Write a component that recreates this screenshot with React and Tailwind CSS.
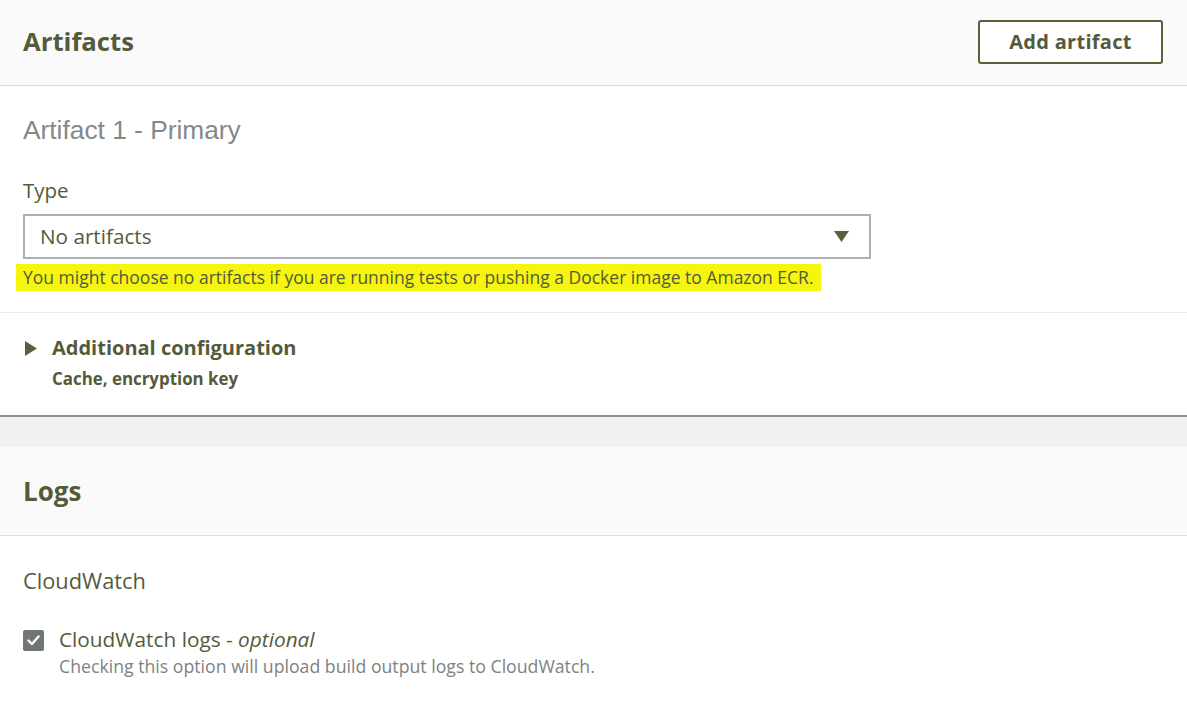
import React from "react";

const olive = "text-[#545b3a]";

export default function App() {
  return (
    <div className="w-[1187px] h-[702px] overflow-hidden bg-white [font-family:'Open_Sans','Noto_Sans',sans-serif]">
      {/* Artifacts header */}
      <div className="h-[86px] bg-[#fafafa] border-b border-[#dcdcdc] px-[23px] flex items-center justify-between">
        <h2 className={`text-[25.7px] font-bold ${olive} leading-none -mt-[2px]`}>Artifacts</h2>
        <button className={`w-[185px] h-[44px] border-2 border-[#5a6038] rounded-[3px] bg-white text-[20px] font-bold ${olive} tracking-[0.3px] mr-[1px] -mt-[2px]`}>
          Add artifact
        </button>
      </div>

      {/* Artifact body */}
      <div className="px-[23px] pt-[28px] pb-[21px]">
        <div className="text-[26.3px] leading-[33px] text-[#84898a] [font-family:'Liberation_Sans',Arial,sans-serif]">
          Artifact 1 - Primary
        </div>
        <div className={`mt-[30px] text-[20.5px] leading-[26px] ${olive}`}>Type</div>
        <div className="mt-[11px] w-[848px] h-[45px] border-2 border-[#aab0b0] flex items-center justify-between pl-[15px] pr-[20px]">
          <span className={`text-[20.7px] ${olive}`}>No artifacts</span>
          <svg width="15" height="11" viewBox="0 0 15 11">
            <polygon points="0,0 15,0 7.5,11" fill="#5a5f3c" />
          </svg>
        </div>
        <div className="mt-[5px]">
          <span className="inline-block bg-[#f5f50e] -ml-[7px] px-[7px] py-[2px] text-[17.5px] leading-[23px] text-[#545b3a]">
            You might choose no artifacts if you are running tests or pushing a Docker image to Amazon ECR.
          </span>
        </div>
      </div>

      {/* Additional configuration */}
      <div className="border-t border-[#ececec] border-b-2 border-b-[#8d928d] px-[23px] pt-[21px] h-[105px]">
        <div className="flex items-center gap-[15px]">
          <svg width="12" height="15" viewBox="0 0 12 15" className="shrink-0 ml-[2px]">
            <polygon points="0,0 12,7.5 0,15" fill="#5a5f3c" />
          </svg>
          <span className={`text-[20px] leading-[28px] font-bold ${olive}`}>Additional configuration</span>
        </div>
        <div className={`mt-[5px] ml-[29px] text-[16.9px] leading-[24px] font-bold ${olive}`}>
          Cache, encryption key
        </div>
      </div>

      {/* Gap band */}
      <div className="h-[30px] bg-[#f1f1f1]" />

      {/* Logs header */}
      <div className="h-[89px] bg-[#fafafa] border-b border-[#dcdcdc] px-[23px] flex items-center">
        <h2 className={`text-[26px] font-bold ${olive} leading-none`}>Logs</h2>
      </div>

      {/* CloudWatch */}
      <div className="px-[23px] pt-[30px]">
        <div className={`text-[21.8px] leading-[30px] ${olive}`}>CloudWatch</div>
        <div className="mt-[29px] flex gap-[15px]">
          <div className="w-[21px] h-[21px] mt-[5px] rounded-[2px] bg-[#6f7673] flex items-center justify-center shrink-0">
            <svg width="13" height="11" viewBox="0 0 13 11">
              <polyline points="1.5,5.5 5,9 11.5,1.5" fill="none" stroke="white" strokeWidth="2.4" strokeLinecap="round" strokeLinejoin="round" />
            </svg>
          </div>
          <div>
            <div className={`text-[20.8px] leading-[28px] ${olive}`}>
              CloudWatch logs - <span className="italic">optional</span>
            </div>
            <div className="text-[17.7px] leading-[24px] text-[#7d8283] mt-[1px]">
              Checking this option will upload build output logs to CloudWatch.
            </div>
          </div>
        </div>
      </div>
    </div>
  );
}
